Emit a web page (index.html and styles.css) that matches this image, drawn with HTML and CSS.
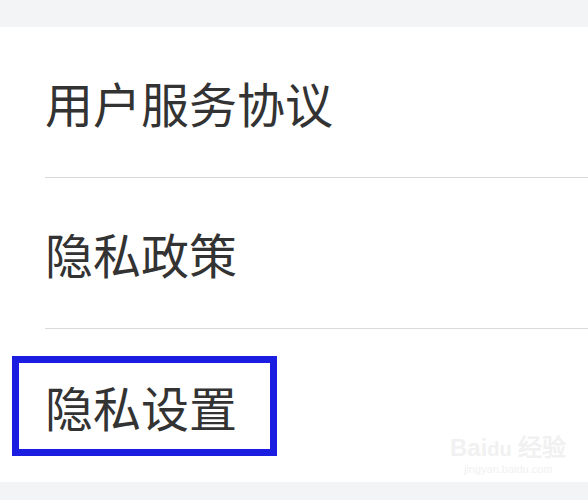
FILE: index.html
```html
<!DOCTYPE html>
<html lang="zh-CN">
<head>
    <meta charset="UTF-8">
    <meta name="viewport" content="width=device-width, initial-scale=1.0">
    <title>设置</title>
    <link rel="stylesheet" href="styles.css">
</head>
<body>
    <div class="page">
        <div class="top-band"></div>

        <ul class="menu">
            <li class="menu-item">用户服务协议</li>
            <li class="menu-item">隐私政策</li>
            <li class="menu-item marked">
                隐私设置
                <span class="highlight-box"></span>
            </li>
        </ul>

        <div class="bottom-band"></div>

        <div class="watermark">
            <div class="wm-logo">Bai<span class="wm-du">du</span> 经验</div>
            <div class="wm-url">jingyan.baidu.com</div>
        </div>
    </div>
</body>
</html>
```

FILE: styles.css
```css
html, body {
    margin: 0;
    padding: 0;
}
body {
    font-family: "Noto Sans CJK SC", "Noto Sans", sans-serif;
    background-color: #fff;
    color: #333;
}
.page {
    position: relative;
    width: 588px;
    height: 500px;
    overflow: hidden;
}
.top-band {
    height: 27px;
    background-color: #f3f4f6;
}
.bottom-band {
    height: 19px;
    background-color: #f3f4f6;
}
.menu {
    list-style: none;
    margin: 0;
    padding: 0;
}
.menu-item {
    position: relative;
    height: 150px;
    margin-left: 45px;
    display: flex;
    align-items: center;
    font-size: 48px;
    line-height: 1;
    border-bottom: 1px solid #dadada;
}
.menu-item.marked {
    height: 153px;
    border-bottom: none;
}
/* annotation drawn over the last row */
.highlight-box {
    position: absolute;
    left: -33px;
    top: 27px;
    width: 251px;
    height: 86px;
    border: 7px solid #1b1ee0;
}
.watermark {
    position: absolute;
    left: 450px;
    top: 436px;
    color: #f1f1f1;
    text-align: center;
    line-height: 1;
}
.wm-logo {
    font-family: "Liberation Sans", sans-serif;
    font-size: 24px;
    font-weight: bold;
}
.wm-du {
    font-size: 20px;
}
.wm-url {
    font-family: "Liberation Sans", sans-serif;
    font-size: 11px;
    margin-top: 4px;
}
```
